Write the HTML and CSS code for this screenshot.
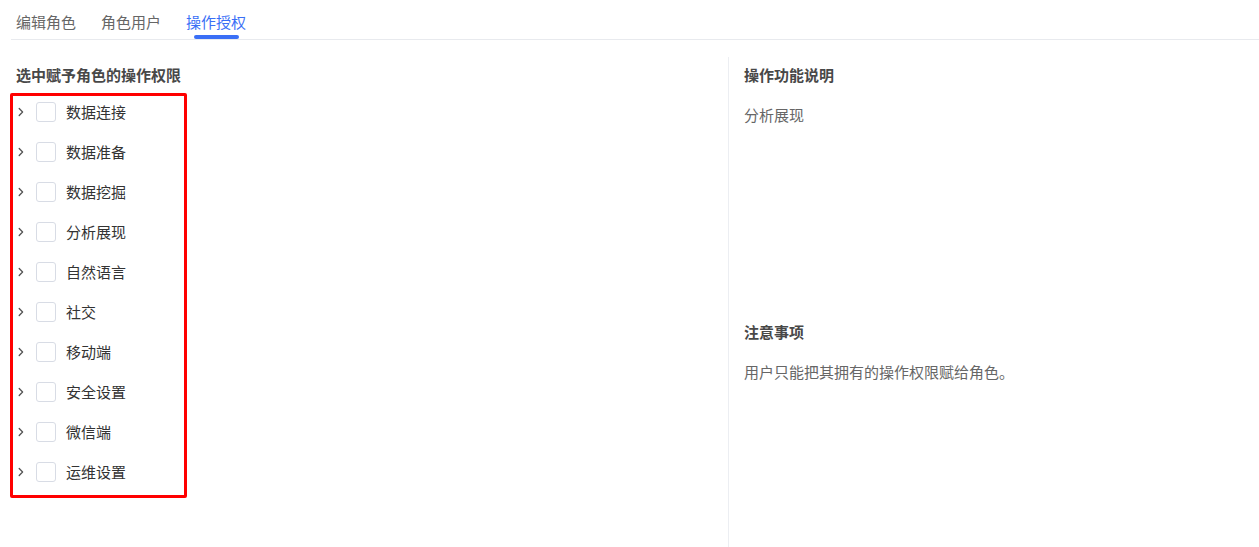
FILE: index.html
```html
<!DOCTYPE html>
<html lang="zh-CN">
<head>
<meta charset="utf-8">
<title>操作授权</title>
<link rel="stylesheet" href="styles.css">
</head>
<body>
<div class="page">
  <div class="tabs">
    <div class="tab">编辑角色</div>
    <div class="tab">角色用户</div>
    <div class="tab active">操作授权<span class="ink"></span></div>
  </div>
  <div class="main">
    <div class="left">
      <div class="title">选中赋予角色的操作权限</div>
      <div class="tree">
        <div class="row"><svg class="chev" width="6" height="10" viewBox="0 0 6 10"><path d="M1.2 1.5 L4.6 5 L1.2 8.5"/></svg><span class="cb"></span><span class="label">数据连接</span></div>
        <div class="row"><svg class="chev" width="6" height="10" viewBox="0 0 6 10"><path d="M1.2 1.5 L4.6 5 L1.2 8.5"/></svg><span class="cb"></span><span class="label">数据准备</span></div>
        <div class="row"><svg class="chev" width="6" height="10" viewBox="0 0 6 10"><path d="M1.2 1.5 L4.6 5 L1.2 8.5"/></svg><span class="cb"></span><span class="label">数据挖掘</span></div>
        <div class="row"><svg class="chev" width="6" height="10" viewBox="0 0 6 10"><path d="M1.2 1.5 L4.6 5 L1.2 8.5"/></svg><span class="cb"></span><span class="label">分析展现</span></div>
        <div class="row"><svg class="chev" width="6" height="10" viewBox="0 0 6 10"><path d="M1.2 1.5 L4.6 5 L1.2 8.5"/></svg><span class="cb"></span><span class="label">自然语言</span></div>
        <div class="row"><svg class="chev" width="6" height="10" viewBox="0 0 6 10"><path d="M1.2 1.5 L4.6 5 L1.2 8.5"/></svg><span class="cb"></span><span class="label">社交</span></div>
        <div class="row"><svg class="chev" width="6" height="10" viewBox="0 0 6 10"><path d="M1.2 1.5 L4.6 5 L1.2 8.5"/></svg><span class="cb"></span><span class="label">移动端</span></div>
        <div class="row"><svg class="chev" width="6" height="10" viewBox="0 0 6 10"><path d="M1.2 1.5 L4.6 5 L1.2 8.5"/></svg><span class="cb"></span><span class="label">安全设置</span></div>
        <div class="row"><svg class="chev" width="6" height="10" viewBox="0 0 6 10"><path d="M1.2 1.5 L4.6 5 L1.2 8.5"/></svg><span class="cb"></span><span class="label">微信端</span></div>
        <div class="row"><svg class="chev" width="6" height="10" viewBox="0 0 6 10"><path d="M1.2 1.5 L4.6 5 L1.2 8.5"/></svg><span class="cb"></span><span class="label">运维设置</span></div>
      </div>
      <div class="highlight"></div>
    </div>
    <div class="right">
      <div class="section first">
        <div class="title">操作功能说明</div>
        <div class="desc">分析展现</div>
      </div>
      <div class="section">
        <div class="title">注意事项</div>
        <div class="desc">用户只能把其拥有的操作权限赋给角色。</div>
      </div>
    </div>
  </div>
</div>
</body>
</html>
```
FILE: styles.css
```css
html, body {
  margin: 0;
  padding: 0;
  background: #fff;
}
body {
  font-family: "Noto Sans CJK SC", "Noto Sans", sans-serif;
  font-size: 15px;
  color: #333;
}
.page {
  padding-left: 11px;
  height: 547px;
  box-sizing: border-box;
  display: flex;
  flex-direction: column;
}
.tabs {
  display: flex;
  gap: 25px;
  height: 39px;
  padding-left: 5px;
  border-bottom: 1px solid #e8eaee;
}
.tab {
  display: flex;
  flex-direction: column;
  align-items: center;
  justify-content: space-between;
  padding-top: 7px;
  line-height: 30px;
  color: #666;
  font-size: 15px;
}
.tab.active {
  color: #3a6ff6;
}
.tab .ink {
  display: block;
  width: 45px;
  height: 4px;
  border-radius: 2px;
  background: #3a6ff6;
  margin-top: -2px;
}
.main {
  flex: 1;
  display: flex;
  margin-top: 17px;
}
.left {
  position: relative;
  width: 717px;
  padding-top: 8px;
}
.title {
  font-weight: 700;
  line-height: 20px;
  color: #484848;
  padding-left: 5px;
}
.right .title {
  padding-left: 0;
}
.tree {
  margin-top: 7px;
  display: flex;
  flex-direction: column;
}
.row {
  display: flex;
  align-items: center;
  height: 40px;
}
.chev {
  margin-left: 7px;
  margin-right: 12px;
  fill: none;
  stroke: #555;
  stroke-width: 1.3;
  stroke-linecap: round;
  stroke-linejoin: round;
}
.cb {
  width: 20px;
  height: 20px;
  box-sizing: border-box;
  border: 1px solid #d8dce5;
  border-radius: 3px;
  background: #fff;
  margin-right: 10px;
}
.label {
  color: #333;
  line-height: 20px;
}
.highlight {
  position: absolute;
  left: -1px;
  top: 36px;
  width: 177px;
  height: 405px;
  box-sizing: border-box;
  border: 3px solid #ff0000;
  border-radius: 2px;
  pointer-events: none;
}
.right {
  flex: 1;
  border-left: 1px solid #eceef2;
  padding-left: 15px;
  padding-top: 8px;
}
.section.first {
  height: 257px;
}
.desc {
  margin-top: 20px;
  line-height: 20px;
  color: #666;
}
```
